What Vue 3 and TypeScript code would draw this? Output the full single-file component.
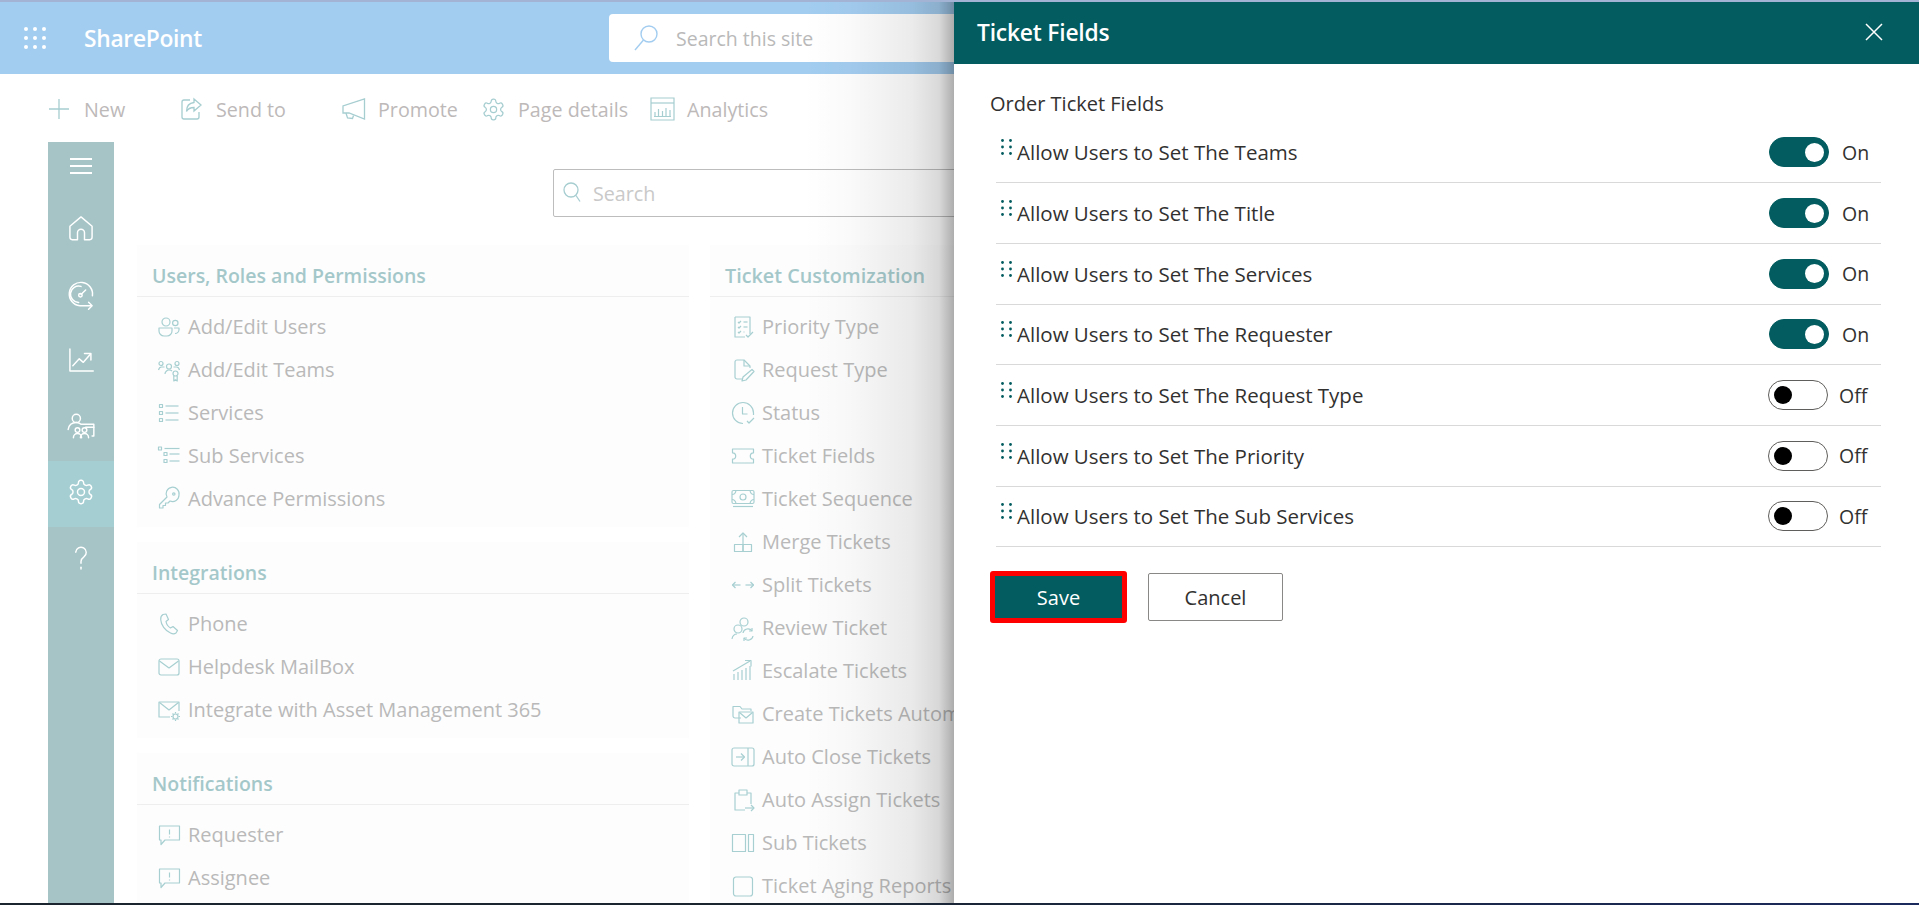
<script setup lang="ts">
type Item = { label: string; icon: string };
const icons: Record<string, string[]> = {
  home: ['M12 2.500 2.500 10.500V20a2 2 0 0 0 2 2H9v-6a3 3 0 0 1 6 0v6h4.500a2 2 0 0 0 2-2v-9.500Z'],
  speed: ['M21.800 13.500A10 10 0 1 0 11 22h10', 'M18.500 19l3 3-3 3', 'M12 5.500a7 7 0 1 0-2 13.700', 'M12 12.500l4-4', 'M13 13a1.500 1.500 0 1 1-3 0 1.500 1.500 0 0 1 3 0'],
  chart: ['M2.500 2.500v19h20', 'M5 17l5.500-6 3.500 3 6-7', 'M15 6.500h5.500V12'],
  team: ['M11.500 5.500a3.500 3.500 0 1 1-7 0 3.500 3.500 0 0 1 7 0', 'M1 15c.500-3.500 3-6 7-6 1.500 0 3 .5 4 1.500H23V20.500H21.500', 'M11 15.500a2 2 0 1 1-4 0 2 2 0 0 1 4 0', 'M17 15.500a2 2 0 1 1-4 0 2 2 0 0 1 4 0', 'M5.500 22c0-2 1.500-3.500 3.500-3.500s3.500 1.500 3.500 3.500', 'M11.500 22c0-2 1.500-3.500 3.500-3.500s3.500 1.500 3.500 3.500', 'M16 13h7'],
  gear: ['M12.220 2h-.44a2 2 0 0 0-2 2v.18a2 2 0 0 1-1 1.730l-.43.25a2 2 0 0 1-2 0l-.15-.08a2 2 0 0 0-2.730.73l-.22.38a2 2 0 0 0 .73 2.730l.15.1a2 2 0 0 1 1 1.720v.51a2 2 0 0 1-1 1.740l-.15.09a2 2 0 0 0-.73 2.730l.22.38a2 2 0 0 0 2.730.73l.15-.08a2 2 0 0 1 2 0l.43.25a2 2 0 0 1 1 1.730V20a2 2 0 0 0 2 2h.44a2 2 0 0 0 2-2v-.18a2 2 0 0 1 1-1.730l.43-.25a2 2 0 0 1 2 0l.15.08a2 2 0 0 0 2.730-.73l.22-.39a2 2 0 0 0-.73-2.730l-.15-.08a2 2 0 0 1-1-1.740v-.5a2 2 0 0 1 1-1.740l.15-.09a2 2 0 0 0 .73-2.730l-.22-.38a2 2 0 0 0-2.730-.73l-.15.08a2 2 0 0 1-2 0l-.43-.25a2 2 0 0 1-1-1.730V4a2 2 0 0 0-2-2z', 'M15 12a3 3 0 1 1-6 0 3 3 0 0 1 6 0'],
  help: ['M7.500 7a4.500 4.500 0 1 1 7 4c-1.700 1.200-2.500 2-2.500 4v1.500', 'M12 20v1.500'],
  users: ['M13 7a4 4 0 1 1-8 0 4 4 0 0 1 8 0', 'M21 8a2.700 2.700 0 1 1-5.400 0 2.700 2.700 0 0 1 5.400 0', 'M2 13h13v3a5 5 0 0 1-5 5H7a5 5 0 0 1-5-5Z', 'M17 13h5v1.500a4 4 0 0 1-4 4'],
  teams: ['M6 5.500a2 2 0 1 1-4 0 2 2 0 0 1 4 0', 'M22 5.500a2 2 0 1 1-4 0 2 2 0 0 1 4 0', 'M14.500 8.500a2.500 2.500 0 1 1-5 0 2.500 2.500 0 0 1 5 0', 'M1.500 12c.500-2 1.500-3 3-3h3', 'M16.500 9h3c1.500 0 2.500 1 3 3', 'M8 16c0-2 2-4 4-4s2.500.5 3 1', 'M21 15.500a2.500 2.500 0 1 1-5 0 2.500 2.500 0 0 1 5 0', 'M16.800 18v5l1.700-1.200 1.700 1.200v-5'],
  list: ['M2.500 3.500h3v3h-3Z', 'M2.500 10.500h3v3h-3Z', 'M2.500 17.500h3v3h-3Z', 'M8.500 5h13', 'M8.500 12h13', 'M8.500 19h13'],
  sublist: ['M1.500 3h3v3h-3Z', 'M7 8.500h3v3H7Z', 'M7 15.500h3v3H7Z', 'M7.500 4.500h15', 'M12.500 10h10', 'M12.500 17h10'],
  key: ['M22 8a6.500 6.500 0 0 1-9 6l-2 2H8.500v2.500H6V21H2.500v-3.500L10 10A6.500 6.500 0 1 1 22 8Z', 'M18 7a1.200 1.200 0 1 1-2.400 0 1.200 1.200 0 0 1 2.400 0'],
  phone: ['M6 2.500 9 2l2.500 5.500L9 9.500c.500 3 2 5 4.500 6.500l2.500-1.500 4.500 4-1.500 2.500c-1.500 1-3.500 1-5.500 0C8 18.500 4 13 3.700 7.500 3.500 5 4.500 3.500 6 2.500Z'],
  mail: ['M4 4h16a2 2 0 0 1 2 2v12a2 2 0 0 1-2 2H4a2 2 0 0 1-2-2V6a2 2 0 0 1 2-2Z', 'M2.500 6 12 13l9.500-7'],
  mailgear: ['M13 19H2V4h20v9', 'M2.500 4.500 12 12l9.500-7.500', 'M21 18.500a2.500 2.500 0 1 1-5 0 2.500 2.500 0 0 1 5 0', 'M18.500 14v1.500', 'M18.500 21.500V23', 'M14 18.500h1.500', 'M21.500 18.500H23', 'M15.500 15.500l1 1', 'M20.500 20.500l1 1', 'M15.500 21.500l1-1', 'M20.500 16.500l1-1'],
  comment: ['M2.500 3h20v14H8l-4 4.500V17H2.500Z', 'M12.500 6.500v5', 'M12.500 13.500v1'],
  priority: ['M4 2h15v17', 'M4 2v20h10', 'M7 7l1 1 2-2', 'M7 12l1 1 2-2', 'M7 17l1 1 2-2', 'M12.500 7h4', 'M12.500 12h4', 'M12.500 17h1', 'M15 20l2 2 5-5'],
  reqtype: ['M11 21H6a2 2 0 0 1-2-2V4a2 2 0 0 1 2-2h7l6 6v2', 'M13 2v6h6', 'M21 11.500l2 2-8 8.500-4 1 1-4Z'],
  status: ['M12 22.500A10.500 10.500 0 1 1 22.500 12v2', 'M11.500 6v7h5', 'M16 20l2 2 5-5'],
  ticket: ['M1.500 5h21v3.800a3.200 3.200 0 0 0 0 6.400V19h-21v-3.800a3.200 3.200 0 0 0 0-6.400Z'],
  sequence: ['M2.500 3.500h19a1.500 1.500 0 0 1 1.500 1.500v10a1.500 1.500 0 0 1-1.500 1.500h-19A1.500 1.500 0 0 1 1 15V5a1.500 1.500 0 0 1 1.500-1.500Z', 'M15 10a3 3 0 1 1-6 0 3 3 0 0 1 6 0', 'M1 7.500c2 0 3.500-1 4-4', 'M23 7.500c-2 0-3.500-1-4-4', 'M1 12.500c2 0 3.500 1 4 4', 'M23 12.500c-2 0-3.500 1-4 4', 'M2 19.500h20'],
  merge: ['M3.500 14.500h8.500v7H3.500Z', 'M12 14.500h8.500v7H12Z', 'M12 14.500V3', 'M8 7l4-4 4 4'],
  split: ['M1.500 12h8', 'M4.500 9l-3 3 3 3', 'M14.500 12h8', 'M19.500 9l3 3-3 3'],
  review: ['M17 6a4 4 0 1 1-8 0 4 4 0 0 1 8 0', 'M11 13a4 4 0 1 1-8 0 4 4 0 0 1 8 0', 'M1 23c.5-3 2.500-5 5-5', 'M12 17a5 5 0 0 1 9-2', 'M22 20a5 5 0 0 1-9 2', 'M21 12v3h-3', 'M13 25v-3h3'],
  escalate: ['M3 21v-6', 'M7 21V13', 'M11 21V11', 'M15 21V9', 'M19 21V7', 'M2 12 19 2', 'M14 1.500h6v6'],
  create: ['M10 16H4a2 2 0 0 1-2-2V4.500h7L11 7h9v2', 'M8 10h14v11H8Z', 'M8.500 10.500l6.500 5.500 6.500-5.500'],
  autoclose: ['M3 3h18a2 2 0 0 1 2 2v14a2 2 0 0 1-2 2H3a2 2 0 0 1-2-2V5a2 2 0 0 1 2-2Z', 'M17 3v18', 'M5 12h8', 'M10 8.500l3.500 3.500-3.500 3.500'],
  assign: ['M14 22H4V5h4', 'M16 5h4v11', 'M8 2h8v5H8Z', 'M14 20h9', 'M20 17l3 3-3 3'],
  sub: ['M1.500 3.500h13v17h-13Z', 'M17.500 3.500h5v17h-5Z'],
  aging: ['M5 3h14a2.500 2.500 0 0 1 2.500 2.500v14A2.500 2.500 0 0 1 19 22H5a2.500 2.500 0 0 1-2.500-2.500v-14A2.500 2.500 0 0 1 5 3Z'],
};
const commands = [
  { label: 'New', cls: 'c-new' },
  { label: 'Send to', cls: 'c-send' },
  { label: 'Promote', cls: 'c-promote' },
  { label: 'Page details', cls: 'c-details' },
  { label: 'Analytics', cls: 'c-analytics' },
];
const nav = ['home', 'speed', 'chart', 'team', 'gear', 'help'];
const sections: { title: string; cls: string; items: Item[] }[] = [
  { title: 'Users, Roles and Permissions', cls: '', items: [
    { label: 'Add/Edit Users', icon: 'users' }, { label: 'Add/Edit Teams', icon: 'teams' },
    { label: 'Services', icon: 'list' }, { label: 'Sub Services', icon: 'sublist' },
    { label: 'Advance Permissions', icon: 'key' } ] },
  { title: 'Integrations', cls: '', items: [
    { label: 'Phone', icon: 'phone' }, { label: 'Helpdesk MailBox', icon: 'mail' },
    { label: 'Integrate with Asset Management 365', icon: 'mailgear' } ] },
  { title: 'Notifications', cls: 'last', items: [
    { label: 'Requester', icon: 'comment' }, { label: 'Assignee', icon: 'comment' } ] },
];
const ticket: Item[] = [
  { label: 'Priority Type', icon: 'priority' }, { label: 'Request Type', icon: 'reqtype' },
  { label: 'Status', icon: 'status' }, { label: 'Ticket Fields', icon: 'ticket' },
  { label: 'Ticket Sequence', icon: 'sequence' }, { label: 'Merge Tickets', icon: 'merge' },
  { label: 'Split Tickets', icon: 'split' }, { label: 'Review Ticket', icon: 'review' },
  { label: 'Escalate Tickets', icon: 'escalate' }, { label: 'Create Tickets Automatically', icon: 'create' },
  { label: 'Auto Close Tickets', icon: 'autoclose' }, { label: 'Auto Assign Tickets', icon: 'assign' },
  { label: 'Sub Tickets', icon: 'sub' }, { label: 'Ticket Aging Reports', icon: 'aging' },
];
const fields = [
  { label: 'Allow Users to Set The Teams', on: true },
  { label: 'Allow Users to Set The Title', on: true },
  { label: 'Allow Users to Set The Services', on: true },
  { label: 'Allow Users to Set The Requester', on: true },
  { label: 'Allow Users to Set The Request Type', on: false },
  { label: 'Allow Users to Set The Priority', on: false },
  { label: 'Allow Users to Set The Sub Services', on: false },
];
</script>

<template>
  <div class="root">
    <div class="strip"></div>
    <header class="suite">
      <svg class="waffle" width="22" height="22" viewBox="0 0 22 22">
        <template v-for="y in [2, 11, 20]" :key="y">
          <circle v-for="x in [2, 11, 20]" :key="x" :cx="x" :cy="y" r="2" fill="#fff" />
        </template>
      </svg>
      <span class="brand">SharePoint</span>
      <div class="site-search">
        <svg width="26" height="28" viewBox="0 0 26 28" fill="none" stroke="#a3cdf0" stroke-width="1.400">
          <circle cx="16" cy="10" r="8" />
          <path d="M10.500 16 2 26" />
        </svg>
        <span>Search this site</span>
      </div>
    </header>

    <nav class="commands">
      <div v-for="c in commands" :key="c.label" class="cmd" :class="c.cls">
        <svg v-if="c.cls === 'c-new'" width="20" height="22" viewBox="0 0 20 22" fill="none" stroke="#a6cdd0" stroke-width="1.300"><path d="M10 1v20M0 11h20" /></svg>
        <svg v-else-if="c.cls === 'c-send'" width="22" height="24" viewBox="0 0 22 24" fill="none" stroke="#a6cdd0" stroke-width="1.300"><path d="M9 3H3a2 2 0 0 0-2 2v15a2 2 0 0 0 2 2h13a2 2 0 0 0 2-2v-5" /><path d="M13 2l7 6-7 6v-3.500c-3.500 0-6 1-7.500 4 0-5 2.500-8.500 7.500-9Z" /></svg>
        <svg v-else-if="c.cls === 'c-promote'" width="25" height="24" viewBox="0 0 25 24" fill="none" stroke="#a6cdd0" stroke-width="1.300"><path d="M23.500 2v20L8 16H2V9Z" /><path d="M5 16l1.500 5 5 .5 1-3" /></svg>
        <svg v-else-if="c.cls === 'c-details'" width="25" height="25" viewBox="0 0 24 24" fill="none" stroke="#a6cdd0" stroke-width="1.200"><path v-for="d in icons.gear" :key="d" :d="d" /></svg>
        <svg v-else width="25" height="24" viewBox="0 0 25 24" fill="none" stroke="#a6cdd0" stroke-width="1.200"><path d="M1 1h23v22H1Z" /><path d="M1 6h23" /><path d="M5 19v-4M8.500 19v-7M12.500 19v-5M16 19v-8M20 19v-6M4 19.500h17" /></svg>
        <span>{{ c.label }}</span>
      </div>
    </nav>

    <div class="workspace">
      <aside class="rail">
        <div class="burger"><span></span><span></span><span></span></div>
        <div v-for="n in nav" :key="n" class="rail-item" :class="{ active: n === 'gear' }">
          <svg width="28" height="28" viewBox="0 0 24 24" fill="none" stroke="#fff" stroke-width="1.250" stroke-linecap="round" stroke-linejoin="round" overflow="visible">
            <path v-for="d in icons[n]" :key="d" :d="d" />
          </svg>
        </div>
      </aside>
      <main class="content">
        <div class="search-row">
          <div class="search">
            <svg width="18" height="24" viewBox="0 0 18 24" fill="none" stroke="#a6cdd0" stroke-width="1.300"><circle cx="8" cy="9" r="7" /><path d="M13 14.500l4 6" /></svg>
            <span>Search</span>
          </div>
        </div>
        <div class="columns">
          <div class="col">
            <section v-for="s in sections" :key="s.title" class="card" :class="s.cls">
              <h2>{{ s.title }}</h2>
              <ul>
                <li v-for="i in s.items" :key="i.label">
                  <svg class="ico" width="24" height="24" viewBox="0 0 24 24" fill="none" stroke="#a7cfd1" stroke-width="1.200" stroke-linejoin="round" overflow="visible"><path v-for="d in icons[i.icon]" :key="d" :d="d" /></svg>
                  <span>{{ i.label }}</span>
                </li>
              </ul>
            </section>
          </div>
          <div class="col wide">
            <section class="card last">
              <h2>Ticket Customization</h2>
              <ul>
                <li v-for="i in ticket" :key="i.label">
                  <svg class="ico" width="24" height="24" viewBox="0 0 24 24" fill="none" stroke="#a7cfd1" stroke-width="1.200" stroke-linejoin="round" overflow="visible"><path v-for="d in icons[i.icon]" :key="d" :d="d" /></svg>
                  <span>{{ i.label }}</span>
                </li>
              </ul>
            </section>
          </div>
        </div>
      </main>
    </div>
    <div class="taskbar"></div>

    <div class="scrim"></div>
    <aside class="panel">
      <div class="panel-head">
        <h1>Ticket Fields</h1>
        <svg width="18" height="18" viewBox="0 0 18 18" fill="none" stroke="#fff" stroke-width="1.500"><path d="M1 1l16 16M17 1 1 17" /></svg>
      </div>
      <div class="panel-body">
        <h3>Order Ticket Fields</h3>
        <div class="rows">
          <div v-for="f in fields" :key="f.label" class="row">
            <svg class="grip" width="11" height="16" viewBox="0 0 11 16" fill="#035c5f">
              <template v-for="y in [1.500, 8, 14.500]" :key="y">
                <circle cx="1.500" :cy="y" r="1.400" /><circle cx="9.500" :cy="y" r="1.400" />
              </template>
            </svg>
            <span class="field">{{ f.label }}</span>
            <span class="toggle" :class="{ on: f.on }"><i></i></span>
            <span class="state" :class="{ off: !f.on }">{{ f.on ? 'On' : 'Off' }}</span>
          </div>
        </div>
        <div class="actions">
          <button class="save" type="button">Save</button>
          <button class="cancel" type="button">Cancel</button>
        </div>
      </div>
    </aside>
  </div>
</template>

<style>
html, body { margin: 0; background: #fff; }
</style>

<style scoped>
.root { position: relative; width: 1919px; height: 905px; overflow: hidden; background: #fff; font-family: "Open Sans", "Noto Sans", sans-serif; display: flex; flex-direction: column; }
.strip { height: 2px; background: #a3b3d3; position: relative; z-index: 5; flex: none; }
.suite { height: 72px; flex: none; background: #a3cdf0; display: flex; align-items: center; }
.waffle { margin-left: 24px; }
.brand { margin-left: 38px; width: 117px; margin-right: 408px; color: #fff; font-size: 22.800px; font-weight: 600; letter-spacing: -.3px; white-space: nowrap; }
.site-search { width: 560px; height: 48px; background: #fff; border-radius: 4px; display: flex; align-items: center; color: #b9b9b9; font-size: 19.500px; }
.site-search svg { margin-left: 24px; margin-right: 17px; }
.commands { height: 68px; flex: none; display: flex; align-items: center; color: #bdb9b9; font-size: 19.700px; padding: 2px 0 0 49px; box-sizing: border-box; }
.cmd { display: flex; align-items: center; gap: 13px; }
.c-new { gap: 15px; width: 132px; }
.c-send { width: 160px; }
.c-promote { width: 140px; gap: 12px; }
.c-details { width: 169px; gap: 12px; }
.c-analytics { gap: 12px; }
.workspace { flex: 1; min-height: 0; display: flex; padding-left: 48px; }
.rail { width: 66px; flex: none; background: #a6c4c6; display: flex; flex-direction: column; }
.burger { height: 55px; box-sizing: border-box; padding-bottom: 7px; display: flex; flex-direction: column; justify-content: center; align-items: center; gap: 5.500px; }
.burger span { display: block; width: 22px; height: 1.500px; background: #fff; }
.rail-item { height: 66px; flex: none; display: flex; align-items: center; justify-content: center; padding-bottom: 5px; box-sizing: border-box; }
.rail-item.active { background: #a5ced2; }
.content { flex: 1; min-width: 0; padding-left: 23px; display: flex; flex-direction: column; }
.search-row { height: 103px; flex: none; padding: 27px 0 0 416px; box-sizing: border-box; }
.search { width: 600px; height: 48px; box-sizing: border-box; border: 1px solid #bdbdbd; border-radius: 2px; display: flex; align-items: center; padding-left: 9px; gap: 12px; color: #c9c9c9; font-size: 19.700px; }
.columns { flex: 1; min-height: 0; display: flex; gap: 21px; }
.col { width: 552px; flex: none; display: flex; flex-direction: column; gap: 15px; }
.card { background: #fdfdfd; }
.card.last { flex: 1; }
h2 { margin: 0; height: 52px; box-sizing: border-box; padding: 17px 0 0 15px; border-bottom: 1px solid #eeeeee; color: #a4c8ca; font-size: 19.500px; line-height: 27px; font-weight: 600; }
.wide h2 { font-size: 19.800px; }
ul { list-style: none; margin: 0; padding: 8px 0 7px; }
li { height: 43px; display: flex; align-items: center; padding-left: 20px; color: #b9b9b9; font-size: 20px; white-space: nowrap; }
.ico { flex: none; margin-right: 7px; }
.wide li { padding-left: 21px; }
.taskbar { height: 2px; flex: none; background: linear-gradient(90deg, #1a2530, #1a2530 40%, #1b2a5c); position: relative; z-index: 5; }
.scrim { position: absolute; top: 2px; bottom: 2px; left: 804px; width: 150px; background: linear-gradient(90deg, rgba(0,0,0,0), rgba(0,0,0,.02) 30%, rgba(0,0,0,.08) 72%, rgba(0,0,0,.15) 90%, rgba(0,0,0,.32)); }
.panel { position: absolute; top: 2px; right: 0; bottom: 2px; width: 965px; background: #fff; color: #323130; display: flex; flex-direction: column; }
.panel-head { height: 62px; flex: none; background: #035c5f; display: flex; align-items: center; justify-content: space-between; padding: 0 36px 2px 23px; box-sizing: border-box; color: #fff; }
h1 { margin: 0; font-size: 22.800px; font-weight: 600; letter-spacing: -.2px; }
.panel-body { padding: 0 38px 0 36px; }
h3 { margin: 0; padding-top: 26px; height: 58.500px; box-sizing: border-box; font-size: 20px; line-height: 27px; font-weight: 400; color: #323130; }
.rows { margin-left: 6px; }
.row { height: 60.700px; box-sizing: border-box; border-bottom: 1.500px solid #d9d9d9; display: flex; align-items: center; padding-left: 5px; position: relative; }
.grip { flex: none; margin-right: 5px; margin-top: -10px; }
.field { flex: 1; font-size: 20.500px; color: #323130; }
.toggle { width: 60px; height: 30px; box-sizing: border-box; border-radius: 15px; border: 1px solid #605e5c; display: flex; align-items: center; padding-left: 5px; background: #fff; flex: none; }
.toggle i { display: block; width: 18px; height: 18px; border-radius: 50%; background: #000; }
.toggle.on { background: #035c5f; border-color: #035c5f; padding-left: 35px; }
.toggle.on i { background: #fff; width: 19px; height: 19px; }
.state { width: 39px; margin-left: 13px; font-size: 19.500px; color: #323130; flex: none; }
.state.off { margin-left: 11px; width: 42px; }
.actions { display: flex; align-items: center; margin-top: 24px; gap: 21px; }
button { font: inherit; font-size: 20px; cursor: pointer; box-sizing: border-box; }
.save { width: 137px; height: 52px; border: 5px solid #f00; border-radius: 3px; background: #035c5f; color: #fff; }
.cancel { width: 135px; height: 48px; border: 1px solid #8a8886; border-radius: 2px; background: #fff; color: #323130; }
</style>
